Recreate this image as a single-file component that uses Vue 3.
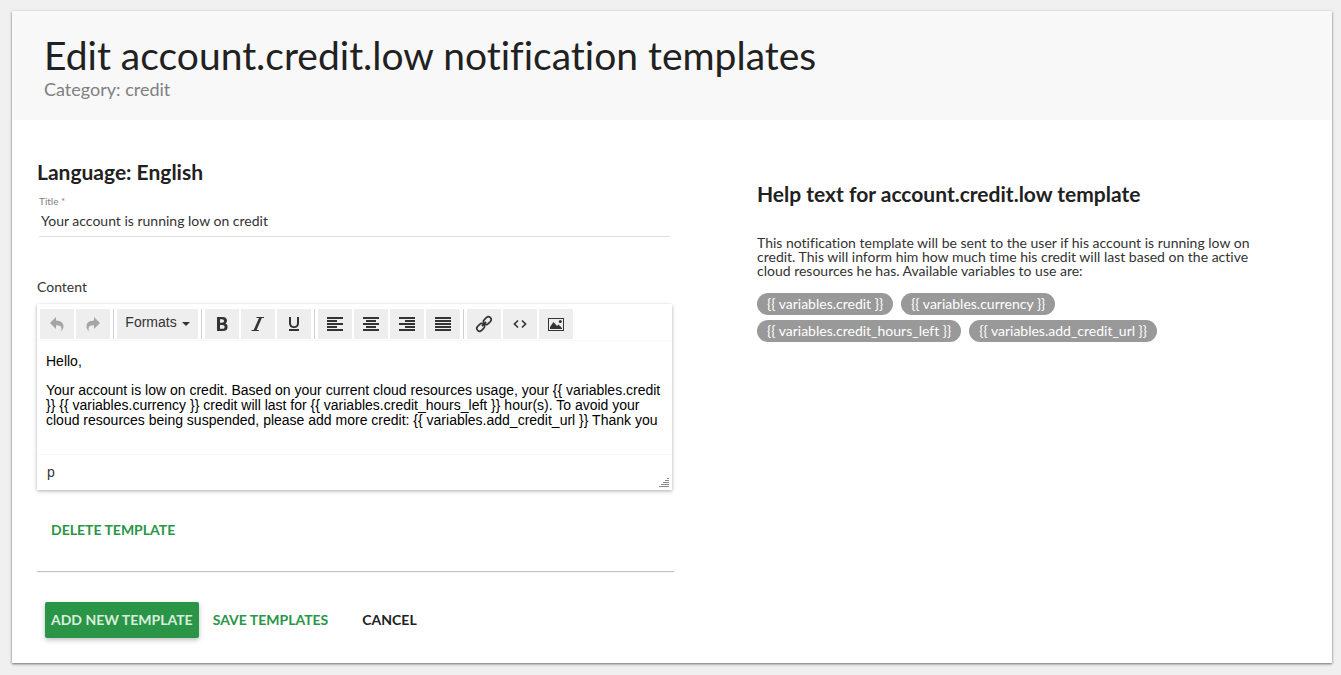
<script setup>
import { ref } from 'vue'

const title = ref('Your account is running low on credit')

const paragraphs = [
  'Hello,',
  'Your account is low on credit. Based on your current cloud resources usage, your {{ variables.credit }} {{ variables.currency }} credit will last for {{ variables.credit_hours_left }} hour(s). To avoid your cloud resources being suspended, please add more credit: {{ variables.add_credit_url }} Thank you'
]

const variables = [
  '{{ variables.credit }}',
  '{{ variables.currency }}',
  '{{ variables.credit_hours_left }}',
  '{{ variables.add_credit_url }}'
]

const alignments = [
  { label: 'Align left', path: 'M0 1h16v2H0zM0 4h10v2H0zM0 7h16v2H0zM0 10h10v2H0zM0 13h16v2H0z' },
  { label: 'Align center', path: 'M0 1h16v2H0zM3 4h10v2H3zM0 7h16v2H0zM3 10h10v2H3zM0 13h16v2H0z' },
  { label: 'Align right', path: 'M0 1h16v2H0zM6 4h10v2H6zM0 7h16v2H0zM6 10h10v2H6zM0 13h16v2H0z' },
  { label: 'Justify', path: 'M0 1h16v2H0zM0 4h16v2H0zM0 7h16v2H0zM0 10h16v2H0zM0 13h16v2H0z' }
]
</script>

<template>
  <main class="card">
    <header class="card-header">
      <h1>Edit account.credit.low notification templates</h1>
      <p class="category">Category: credit</p>
    </header>

    <div class="card-body">
      <form class="form" @submit.prevent>
        <h2>Language: English</h2>
        <div class="field">
          <label for="title">Title *</label>
          <input id="title" v-model="title" type="text" required>
        </div>

        <p id="content-label" class="content-label">Content</p>
        <div class="editor">
          <div class="toolbar" role="toolbar" aria-label="Formatting">
            <div class="group">
              <button type="button" class="tool" aria-label="Undo" disabled>
                <svg viewBox="0 0 16 16"><path d="M7 1v3.500C12 4.600 14.500 7 14.500 10.400c0 1.900-1.200 3.800-3 4.900.8-1.200 1.200-2.300 1-3.300-.4-2-2.200-2.700-5.500-2.700V13L1 7z" /></svg>
              </button>
              <button type="button" class="tool" aria-label="Redo" disabled>
                <svg viewBox="0 0 16 16"><path d="M9 1v3.500C4 4.600 1.500 7 1.500 10.400c0 1.900 1.200 3.800 3 4.900-.8-1.200-1.200-2.300-1-3.300.4-2 2.200-2.700 5.500-2.700V13l6-6z" /></svg>
              </button>
            </div>
            <div class="group">
              <button type="button" class="formats" aria-haspopup="true">Formats<span class="caret"></span></button>
            </div>
            <div class="group">
              <button type="button" class="tool" aria-label="Bold">
                <svg viewBox="0 0 16 16"><path fill-rule="evenodd" d="M3 1h5.800C11.500 1 13 2.500 13 4.600c0 1.400-.6 2.400-1.600 3 1.400.5 2.200 1.700 2.200 3.300 0 2.600-1.700 4.100-4.600 4.100H3zM6 3.200v3.500h2c1.300 0 2-.6 2-1.700s-.7-1.800-2-1.800zM6 9v3.800h2.300c1.500 0 2.300-.7 2.300-1.900S9.800 9 8.300 9z" /></svg>
              </button>
              <button type="button" class="tool" aria-label="Italic">
                <svg viewBox="0 0 16 16"><path d="M6.500 1H14v1h-2.200L6.600 14h2.200v1H1.500v-1h2.200L9 2H6.500z" /></svg>
              </button>
              <button type="button" class="tool" aria-label="Underline">
                <svg viewBox="0 0 16 16"><path d="M3 1h2v6c0 2.200 1 3.200 3 3.200s3-1 3-3.200V1h2v6c0 3.200-1.800 5-5 5S3 10.200 3 7zM3 13h10v2H3z" /></svg>
              </button>
            </div>
            <div class="group">
              <button v-for="item in alignments" :key="item.label" type="button" class="tool" :aria-label="item.label">
                <svg viewBox="0 0 16 16" shape-rendering="crispEdges"><path :d="item.path" /></svg>
              </button>
            </div>
            <div class="group">
              <button type="button" class="tool" aria-label="Insert link">
                <svg viewBox="0 0 16 16">
                  <g class="stroke" transform="rotate(-45 8 8)">
                    <rect x="-1" y="5.200" width="8.500" height="5.600" rx="2.800" />
                    <rect x="8.500" y="5.200" width="8.500" height="5.600" rx="2.800" />
                    <path d="M5 8h6" />
                  </g>
                </svg>
              </button>
              <button type="button" class="tool" aria-label="Source code">
                <svg viewBox="0 0 16 16"><path class="stroke code" d="M6 4.500L2.400 8 6 11.500M10 4.500L13.600 8 10 11.500" /></svg>
              </button>
              <button type="button" class="tool" aria-label="Insert image">
                <svg viewBox="0 0 16 16"><path fill-rule="evenodd" d="M0 2h16v13H0zM1 3v11h14V3z" /><path d="M2 13V11l3.500-5 3.500 4 1.500-1.500L14 12v1z" /><circle cx="12.300" cy="5.500" r="1.500" /></svg>
              </button>
            </div>
          </div>
          <div class="content" contenteditable="true" role="textbox" aria-multiline="true" aria-labelledby="content-label">
            <p v-for="text in paragraphs" :key="text">{{ text }}</p>
          </div>
          <div class="statusbar">
            <span>p</span>
            <svg class="grip" viewBox="0 0 10 10" shape-rendering="crispEdges" aria-hidden="true"><path d="M8 0h2v1H8zM6 2h4v1H6zM4 4h6v1H4zM2 6h8v1H2zM0 8h10v1H0z" /></svg>
          </div>
        </div>

        <button type="button" class="action green delete">Delete template</button>
        <hr>
        <div class="actions">
          <button type="button" class="action primary">Add new template</button>
          <button type="submit" class="action green">Save templates</button>
          <button type="button" class="action cancel">Cancel</button>
        </div>
      </form>

      <aside class="help">
        <h2>Help text for account.credit.low template</h2>
        <p>This notification template will be sent to the user if his account is running low on credit. This will inform him how much time his credit will last based on the active cloud resources he has. Available variables to use are:</p>
        <ul class="chips">
          <li v-for="name in variables" :key="name">{{ name }}</li>
        </ul>
      </aside>
    </div>
  </main>
</template>

<style>
body {
  background: #f0f0f0;
}
</style>

<style scoped>
* {
  box-sizing: border-box;
}

.card {
  margin: 11px 9px 12px 12px;
  background: #fff;
  box-shadow: 0 1px 2px rgba(0, 0, 0, 0.45), 0 1px 4px rgba(0, 0, 0, 0.15);
  color: #212121;
  font-family: Lato, "Liberation Sans", sans-serif;
  font-size: 14px;
  font-variant-ligatures: none;
}

h1,
h2,
p {
  margin: 0;
}

.card-header {
  padding: 21px 32px;
  background: #f8f8f8;
}

h1 {
  font-size: 39px;
  font-weight: 400;
  line-height: 47px;
}

.category {
  color: #808080;
  font-size: 18px;
  line-height: 20px;
}

.card-body {
  display: grid;
  grid-template-columns: 1fr 1fr;
  padding: 0 21px 0 25px;
}

.form {
  padding: 40px 0 25px;
}

h2 {
  font-size: 21px;
  font-weight: 700;
  line-height: 24px;
}

.field {
  display: flex;
  flex-direction: column;
  margin: 11px 4px 0 2px;
}

.field label {
  color: #808080;
  font-size: 10px;
  line-height: 12px;
}

.field input {
  height: 30px;
  padding: 0 2px 2px;
  border: 0;
  border-bottom: 1px solid #dedede;
  outline: 0;
  background: transparent;
  color: #333;
  font: inherit;
}

.content-label {
  margin-top: 41px;
  color: #333;
  line-height: 18px;
}

.editor {
  margin: 8px 2px 0 0;
  background: #fff;
  box-shadow: 0 1px 3px rgba(0, 0, 0, 0.25), 0 2px 6px rgba(0, 0, 0, 0.08);
  font-family: "Liberation Sans", Arial, sans-serif;
}

.toolbar {
  display: flex;
  padding: 5px 3px 1px;
  border-bottom: 1px solid #f8f8f8;
}

.group {
  display: flex;
  gap: 2px;
}

.group + .group {
  margin-left: 3px;
  padding-left: 3px;
  border-left: 1px solid #d0d0d0;
}

.tool,
.formats {
  display: flex;
  align-items: center;
  justify-content: center;
  height: 30px;
  padding: 0;
  border: 0;
  background: #eee;
  color: #333;
  font: inherit;
}

.tool {
  width: 34px;
}

.tool:disabled {
  color: #a5a5a5;
}

.tool svg {
  width: 16px;
  height: 16px;
  overflow: visible;
  fill: currentColor;
}

.tool .stroke {
  fill: none;
  stroke: currentColor;
  stroke-width: 1.6;
}

.formats {
  width: 81px;
  padding-bottom: 4px;
}

.caret {
  margin: 4px 0 0 5px;
  border: 4px solid transparent;
  border-top-color: #333;
  border-bottom: 0;
}

.content {
  min-height: 113px;
  padding: 13px 8px 10px 9px;
  outline: 0;
  color: #000;
  line-height: 15px;
}

.content p + p {
  margin-top: 14px;
}

.statusbar {
  display: flex;
  align-items: center;
  justify-content: space-between;
  height: 36px;
  padding: 0 3px 2px 10px;
  border-top: 1px solid #f8f8f8;
  color: #333;
}

.grip {
  align-self: flex-end;
  width: 10px;
  height: 10px;
  fill: #888;
}

.action {
  height: 36px;
  padding: 0 6px 2px;
  border: 0;
  border-radius: 2px;
  background: transparent;
  color: #212121;
  font: inherit;
  font-weight: 700;
  text-transform: uppercase;
}

.green {
  color: #2a9547;
}

.delete {
  display: block;
  margin: 22px 0 0 8px;
}

hr {
  margin: 23px 0 0;
  border: 0;
  border-top: 1px solid #c4c4c4;
  border-bottom: 1px solid #f4f4f4;
}

.actions {
  display: flex;
  gap: 8px;
  padding: 29px 8px 0;
}

.primary {
  background: #2a9547;
  box-shadow: 0 2px 5px rgba(0, 0, 0, 0.26);
  color: #d9efdc;
}

.cancel {
  margin-left: 14px;
}

.help {
  padding: 62px 56px 0 83px;
}

.help p {
  margin-top: 30px;
  color: #333;
  line-height: 14px;
}

.chips {
  display: flex;
  flex-wrap: wrap;
  gap: 5px 8px;
  max-width: 420px;
  margin: 15px 0 0;
  padding: 0;
  list-style: none;
}

.chips li {
  padding: 0 10px 1px;
  border-radius: 11px;
  background: #999;
  color: #fff;
  line-height: 21px;
}
</style>
